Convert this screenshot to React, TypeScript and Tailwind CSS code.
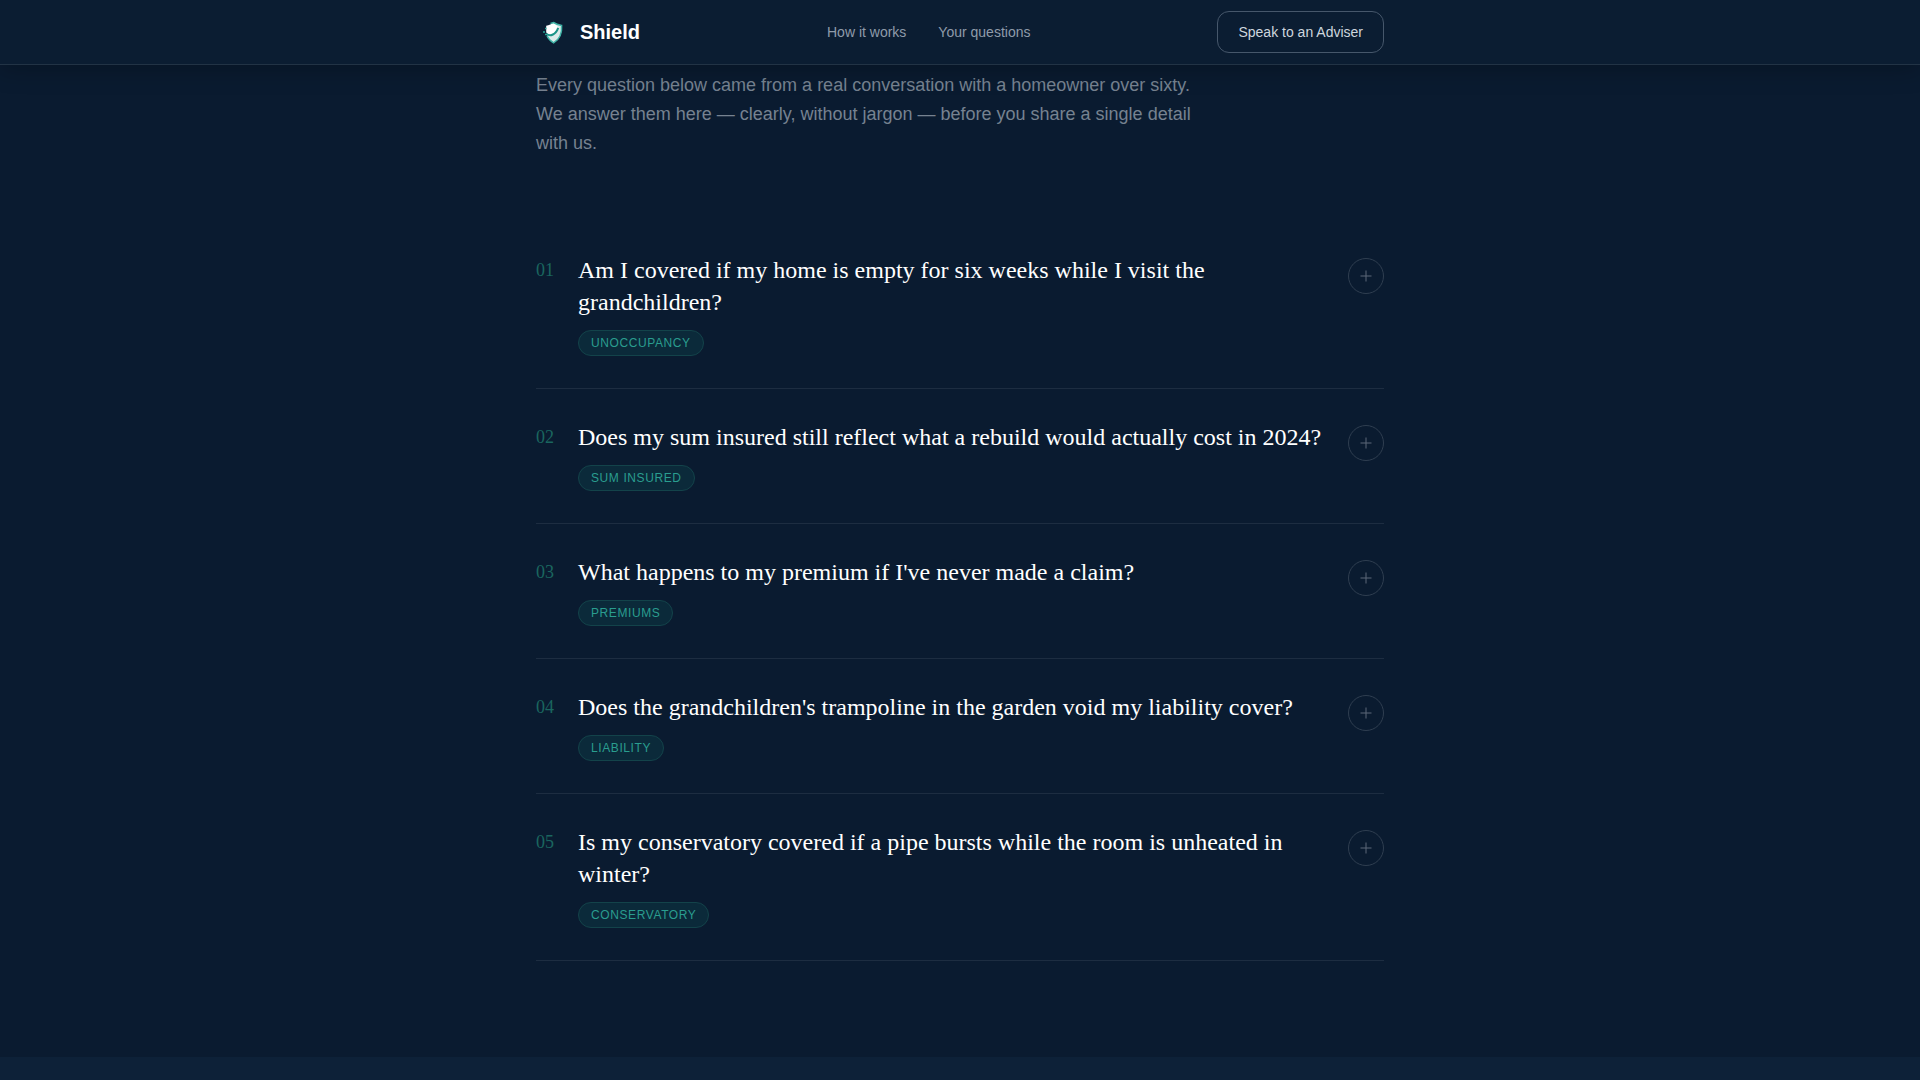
import { useState } from "react";

const questions = [
  {
    id: "01",
    title: "Am I covered if my home is empty for six weeks while I visit the grandchildren?",
    tag: "Unoccupancy",
  },
  {
    id: "02",
    title: "Does my sum insured still reflect what a rebuild would actually cost in 2024?",
    tag: "Sum insured",
  },
  {
    id: "03",
    title: "What happens to my premium if I've never made a claim?",
    tag: "Premiums",
  },
  {
    id: "04",
    title: "Does the grandchildren's trampoline in the garden void my liability cover?",
    tag: "Liability",
  },
  {
    id: "05",
    title: "Is my conservatory covered if a pipe bursts while the room is unheated in winter?",
    tag: "Conservatory",
  },
];

const Logo = () => (
  <svg className="w-8 h-8" viewBox="0 0 32 32" fill="none" aria-hidden="true">
    <path
      d="M17.5 6.5c2.300 1.500 4.800 2.300 8.100 2.900.5 6.600-.6 13.300-8 17.400-3.200-1.700-5.300-4-6.500-6.800"
      fill="#dceaea"
    />
    <path
      d="M17.5 6.5C15.800 8 13 9.200 10.200 9.800v6.500c1 2.500 5 3.500 8.300.2 1.700-1.800 2.700-3.300 3.500-5.500L17.5 6.5z"
      fill="#fff"
    />
    <path
      d="M14.500 7.500l3-1c2.300 1.500 4.800 2.300 8.100 2.900.5 6.600-.6 13.300-8 17.400-3.200-1.700-5.300-4-6.500-6.800"
      stroke="#3fb3a6"
      strokeWidth="1.500"
    />
    <path d="M10.500 18c4 2.800 9.200.6 11.700-6.200" stroke="#1b9488" strokeWidth="2" />
    <path d="M7 16h2M9 12.500h1.500M9 18.500h2.500" stroke="#2aa598" strokeWidth="1.500" />
  </svg>
);

const Header = () => {
  return (
    <header className="sticky top-0 z-10 bg-[#0b1d32] border-b border-[#223345] shadow-[0_4px_24px_rgba(0,0,0,0.25)]">
      <div className="max-w-4xl mx-auto px-6 h-16 flex items-center justify-between">
        <a href="#top" className="flex items-center gap-3">
          <Logo />
          <span className="text-xl font-bold text-white">Shield</span>
        </a>
        <nav className="flex items-center gap-8 text-sm text-[#8f9baa]">
          <a href="#how-it-works">How it works</a>
          <a href="#questions">Your questions</a>
        </nav>
        <button
          type="button"
          className="border border-[#46576b] rounded-xl px-5 py-2.5 text-sm text-[#ced6de]"
        >
          Speak to an Adviser
        </button>
      </div>
    </header>
  );
};

const Question = ({ item }: any) => {
  const { id, title, tag } = item;
  const [open, setOpen] = useState(false);

  return (
    <li className="border-b border-[#1d2d41]">
      <button
        type="button"
        aria-expanded={open}
        onClick={() => setOpen(!open)}
        className="w-full flex items-start gap-6 py-8 text-left"
      >
        <span className="font-['Liberation_Serif',serif] text-lg leading-8 text-[#1a665f]">
          {id}
        </span>
        <span className="flex-1 flex flex-col items-start gap-3">
          <span className="font-['Liberation_Serif',serif] text-2xl text-white">
            {title}
          </span>
          <span className="rounded-full border border-[#13434a] bg-[#0b2a3a] px-3 py-1 text-xs uppercase tracking-wider text-[#2a9d8f]">
            {tag}
          </span>
        </span>
        <span className="mt-1 w-9 h-9 shrink-0 rounded-full border border-[#2f3e50] flex items-center justify-center">
          <svg className="w-4 h-4" viewBox="0 0 16 16" stroke="#5c6878" aria-hidden="true">
            <path d="M2.500 8h11" />
            {!open && <path d="M8 2.500v11" />}
          </svg>
        </span>
      </button>
    </li>
  );
};

export default function App() {
  return (
    <div id="top" className="min-h-screen bg-[#0a1b30] font-['Liberation_Sans',sans-serif]">
      <Header />
      <main>
        <section id="questions" className="max-w-4xl mx-auto px-6 pt-1.5 pb-24">
          <p className="max-w-2xl text-lg leading-[29px] text-[#768290]">
            Every question below came from a real conversation with a homeowner over sixty. We
            answer them here — clearly, without jargon — before you share a single detail with us.
          </p>
          <ul className="mt-16">
            {questions.map((item) => (
              <Question key={item.id} item={item} />
            ))}
          </ul>
        </section>
        <section id="how-it-works" className="h-6 bg-[#0d2138]" />
      </main>
    </div>
  );
}
